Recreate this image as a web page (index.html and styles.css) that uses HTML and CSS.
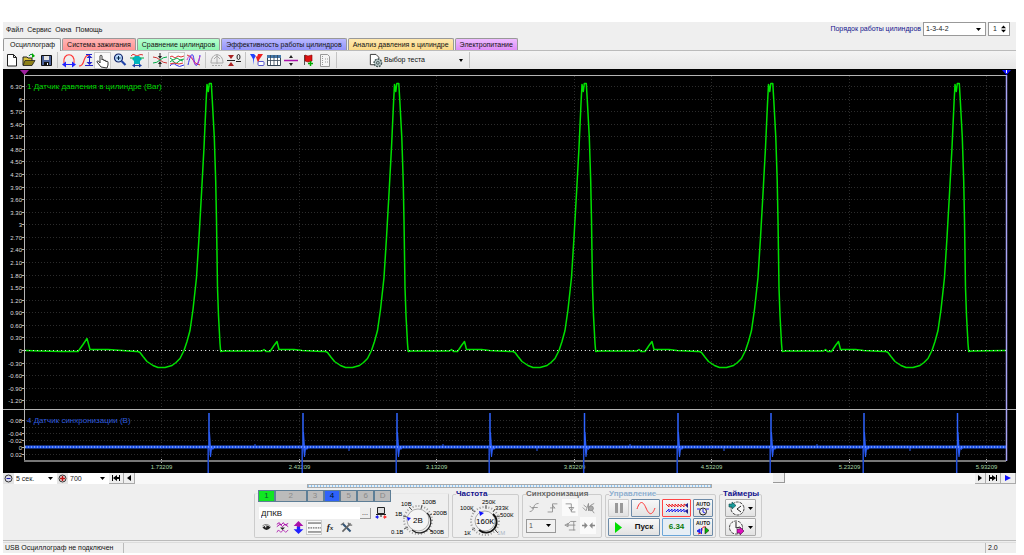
FILE: index.html
```html
<!DOCTYPE html>
<html lang="ru">
<head>
<meta charset="utf-8">
<title>USB Осциллограф</title>
<link rel="stylesheet" href="styles.css">
</head>
<body>
<div class="window">
  <header class="top">
    <nav class="menu">
      <button>Файл</button><button>Сервис</button><button>Окна</button><button>Помощь</button>
    </nav>
    <div class="order">
      <label for="order">Порядок работы цилиндров</label>
      <select id="order" class="combo combo-order"><option>1-3-4-2</option></select>
      <div class="spin">
        <input id="cyl" type="text" value="1" aria-label="Цилиндр">
        <svg width="7" height="10" viewBox="0 0 7 10"><path d="M0 4L3.500 0L7 4ZM0 6L3.500 10L7 6Z"/></svg>
      </div>
    </div>
  </header>

  <div class="tabs">
    <button class="tab active">Осциллограф</button>
    <button class="tab red">Система зажигания</button>
    <button class="tab green">Сравнение цилиндров</button>
    <button class="tab blue">Эффективность работы цилиндров</button>
    <button class="tab yellow">Анализ давления в цилиндре</button>
    <button class="tab violet">Электропитание</button>
  </div>

  <div class="toolbar">
    <button class="tool" aria-label="Новый"><svg viewBox="0 0 16 16"><path d="M3.500 2.500h6l3 3v8.500h-9zM9.500 2.500v3h3" fill="#fff" stroke="#222"/></svg></button>
    <button class="tool" aria-label="Открыть"><svg viewBox="0 0 16 16"><path d="M2 5h4l1 1h4v7H2z" fill="#d8c23c" stroke="#222"/><path d="M4 8.500h10l-3 5H2z" fill="#8d8018" stroke="#222" stroke-width=".8"/><path d="M8 4c1-2 3-2 4-1" fill="none" stroke="#083"/><path d="M11 1l3 3-3 2z" fill="#0a0"/></svg></button>
    <button class="tool" aria-label="Сохранить"><svg viewBox="0 0 16 16"><path d="M3.500 3.500h10v10h-10z" fill="#4a6098" stroke="#111"/><path d="M6 4h5v4H6z" fill="#e5e5e5"/><path d="M6 10h5v3H6z" fill="#111"/><path d="M9 11h1v2H9z" fill="#fff"/></svg></button>
    <span class="sep"></span>
    <button class="tool" aria-label="Период"><svg viewBox="0 0 16 16"><path d="M3 11C1 0 15 0 13 11" fill="none" stroke="#f33" stroke-width="1.200"/><path d="M4 12.500h8" stroke="#22f"/><path d="M1 12.500l4-3v6zM15 12.500l-4-3v6z" fill="#22f"/></svg></button>
    <button class="tool" aria-label="Амплитуда"><svg viewBox="0 0 16 16"><path d="M1 14c5 0 4-5 6-8 1-3 3-3 5-3" fill="none" stroke="#f33" stroke-width="1.200"/><path d="M11.500 5v7M7 13.500h8M8 2.500h6" stroke="#22c"/><path d="M11.500 3l3 3h-6zM11.500 13l3-3h-6z" fill="#22c"/></svg></button>
    <button class="tool on" aria-label="Рука"><svg viewBox="0 0 16 16"><path d="M6 14L2 9c0-2 2-1 3 1V3c0-1 2-1 2 0v4c0-1 2-1 2 0v1c0-1 2-1 2 0v1c0-1 2-1 2 0v3l-1 3z" fill="#fff" stroke="#222" stroke-width=".9"/></svg></button>
    <button class="tool" aria-label="Масштаб"><svg viewBox="0 0 16 16"><circle cx="6.500" cy="6" r="4" fill="#bdf" stroke="#126" stroke-width="1.200"/><path d="M4.500 6h4M6.500 4v4" stroke="#024"/><path d="M9.500 9l4 4" stroke="#24a" stroke-width="2.200"/></svg></button>
    <button class="tool" aria-label="Вписать"><svg viewBox="0 0 16 16"><path d="M2 4q2-3 4-1t4 0q2-1 4 0" fill="none" stroke="#d33"/><path d="M3 7l3-3h4l3 3-2 2H5zM5 9h6v3H5z" fill="#00b4bd"/><path d="M1 6h4M11 6h4" stroke="#0a4"/><path d="M4 13.500h8" stroke="#24a"/><path d="M3 13.500l3-2v4zM13 13.500l-3-2v4z" fill="#24a"/></svg></button>
    <span class="sep"></span>
    <button class="tool" aria-label="Центр"><svg viewBox="0 0 16 16"><path d="M1 5q4 0 7 3t7 3" fill="none" stroke="#c33"/><path d="M1 11q4 0 7-3t7-3" fill="none" stroke="#0a4"/><path d="M8 1v3M8 12v3" stroke="#222"/><path d="M6 4h4L8 7zM6 12h4L8 9z" fill="#222"/></svg></button>
    <button class="tool on" aria-label="Раздельно"><svg viewBox="0 0 16 16" fill="none"><path d="M1 4l2-1 3 2 3-2 3 1 3-1" stroke="#d33"/><path d="M1 9q2-3 4 0t4 0 5-1" stroke="#0a4"/><path d="M1 5l3 2 4-2 3 2 4-1" stroke="#0a4"/><path d="M1 13q3-4 6-1t8 0" stroke="#33e"/><path d="M1 11l4-1 5 1 4-1" stroke="#d33"/></svg></button>
    <button class="tool" aria-label="Вместе"><svg viewBox="0 0 16 16" fill="none"><path d="M1 3q4 1 6 5t7 5" stroke="#d33"/><path d="M2 13C5 0 7 0 8 8s4 8 6-5" stroke="#33e"/><path d="M1 8C4 0 6 5 8 10s4 2 6-6" stroke="#c3c"/></svg></button>
    <span class="sep"></span>
    <button class="tool" aria-label="Авто"><svg viewBox="0 0 16 16" fill="none" stroke="#aaa"><path d="M2 11C2 0 14 0 14 11zM8 2v10M5 7l3-3 3 3"/><path d="M3 13.500h10" stroke-dasharray="2 1"/></svg></button>
    <button class="tool" aria-label="Ноль"><svg viewBox="0 0 16 16"><path d="M1 8.500h8" stroke="#222"/><path d="M2 3h6L5 7zM2 14h6l-3-4z" fill="#a22"/><path d="M10 9.500h5" stroke="#222"/><ellipse cx="12.500" cy="5" rx="1.500" ry="2.500" fill="none" stroke="#222"/></svg></button>
    <span class="sep"></span>
    <button class="tool" aria-label="Фильтр"><svg viewBox="0 0 16 16"><path d="M1 2h7L5 7v6L4 7z" fill="#24f"/><path d="M6 2h8l-4 6v5L8 8z" fill="#e22"/><path d="M5 2h4l-1 3z" fill="#fff"/><rect x="9" y="9.500" width="6" height="4" rx="1" fill="#fff" stroke="#55c"/></svg></button>
    <button class="tool" aria-label="Таблица"><svg viewBox="0 0 16 16"><path d="M1.500 3.500h13v10h-13z" fill="#fff" stroke="#345"/><path d="M1 3h14v3H1z" fill="#47a"/><path d="M4.500 3v10M8 3v10M11.500 3v10M2 8.500h12" stroke="#345" stroke-width=".8"/></svg></button>
    <button class="tool" aria-label="Разделитель"><svg viewBox="0 0 16 16"><path d="M1 8.500h14" stroke="#a1a" stroke-width="1.500"/><path d="M6 6h4L8 3zM6 11h4l-2 3z" fill="#222"/></svg></button>
    <button class="tool" aria-label="Метка"><svg viewBox="0 0 16 16"><path d="M4.500 3v10" stroke="#555"/><path d="M5 3l3 1 4-1v6l-4 1-3-1z" fill="#d11" stroke="#800" stroke-width=".6"/><path d="M10.500 9v5M8 11.500h5" stroke="#0a0" stroke-width="1.500"/></svg></button>
    <button class="tool" aria-label="Отчет"><svg viewBox="0 0 16 16" fill="none"><path d="M3.500 2.500h7l2 2v10h-9z" fill="#f5f5f5" stroke="#999"/><path d="M5.500 4v9M8 7h3M8 10h3" stroke="#999" stroke-dasharray="1 1"/></svg></button>
    <span class="sep"></span>
    <button class="test">
      <svg width="15" height="15" viewBox="0 0 16 16"><path d="M2.500 1.500h6l3 3v8h-9z" fill="#fff" stroke="#333"/><g fill="none" stroke="#455"><circle cx="10.500" cy="10.500" r="4" fill="#bcc" stroke-dasharray="2 1" stroke-width="1.500"/><circle cx="10.500" cy="10.500" r="1.500"/></g></svg>
      <span>Выбор теста</span>
      <svg width="4" height="3" viewBox="0 0 4 3"><path d="M0 0h4L2 3z"/></svg>
    </button>
    <span class="sep"></span>
  </div>

  <svg id="chart" class="chart" viewBox="3 69 1013 404" role="img" aria-label="Осциллограмма"></svg>

  <div class="scroll">
    <button class="step" aria-label="Уменьшить"><svg width="9" height="9" viewBox="0 0 9 9"><circle cx="4.500" cy="4.500" r="3.500" fill="#dde" stroke="#333"/><path d="M2.500 4.500h4" stroke="#22a"/></svg></button>
    <select class="combo combo-time" aria-label="Время"><option>5 сек.</option></select>
    <button class="step" aria-label="Увеличить"><svg width="9" height="9" viewBox="0 0 9 9"><circle cx="4.500" cy="4.500" r="3.500" fill="#edd" stroke="#333"/><path d="M2 4.500h5M4.500 2v5" stroke="#b11" stroke-width="1.500"/></svg></button>
    <select class="combo combo-speed" aria-label="Обороты"><option>700</option></select>
    <button class="nav wide" aria-label="В начало"><svg width="8" height="6" viewBox="0 0 8 6"><path d="M0 0h1v6H0zM5 0v6L1 3zM5 2h2v2H5zM7 0h1v6H7z"/></svg></button>
    <button class="nav" aria-label="Назад"><svg width="4" height="6" viewBox="0 0 4 6"><path d="M4 0v6L0 3z"/></svg></button>
    <div class="track"><span class="thumb"></span></div>
    <button class="nav" aria-label="Вперед"><svg width="4" height="6" viewBox="0 0 4 6"><path d="M0 0v6l4-3z"/></svg></button>
    <button class="nav wide" aria-label="В конец"><svg width="8" height="6" viewBox="0 0 8 6"><path d="M7 0h1v6H7zM3 0v6l4-3zM0 0h1v6H0zM1 2h2v2H1z"/></svg></button>
    <button class="nav wide" aria-label="Следить"><svg width="6" height="6" viewBox="0 0 6 6"><path d="M0 0v6l6-3z" fill="#11f"/></svg></button>
  </div>
  <div class="splitter"><span></span></div>

  <section class="panel">
    <div class="group channels">
      <div class="chan-left">
        <div class="chan-tabs">
          <button class="ch c1">1</button><button class="ch c2">2</button><button class="ch">3</button><button class="ch c4">4</button><button class="ch">5</button><button class="ch">6</button><button class="ch">D</button>
        </div>
        <div class="chan-name">
          <input type="text" value="ДПКВ" aria-label="Датчик"><button class="more">...</button>
          <svg width="12" height="14" viewBox="0 0 12 14"><path d="M2.500 1.500h7v6h-7z" fill="#ddd" stroke="#222"/><path d="M1 8.500h10M6 8v3" stroke="#222"/><path d="M1 11h3" stroke="#22f"/><path d="M8 11h3" stroke="#f33"/><path d="M0 11l3-2v4z" fill="#22e"/><path d="M12 11l-3-2v4z" fill="#f33"/></svg>
        </div>
        <div class="chan-tools">
          <button class="tool" aria-label="Показать"><svg viewBox="0 0 16 16"><path d="M3 8q5-5 10 0-5 6-10 0z" fill="#222"/><circle cx="7" cy="7" r="1" fill="#fff"/><path d="M3 6q5-4 10 1" fill="none" stroke="#666"/></svg></button>
          <button class="tool" aria-label="Сигнал"><svg viewBox="0 0 16 16" fill="none" stroke="#a1a"><path d="M1 4l3-2 2 3 3-3 2 3 4-2M1 7l4-3 3 3 3-3 4 3" stroke-width="1.200"/><path d="M1 14l2-3 3 3 3-3 3 3 3-3"/><path d="M5 8h6l-3 3z" fill="#222" stroke="none"/></svg></button>
          <button class="tool" aria-label="Сдвиг"><svg viewBox="0 0 16 16"><path d="M8 0l6 6h-4v3H6V6H2z" fill="#a1a"/><path d="M8 16l6-6h-4V7H6v3H2z" fill="#22f"/></svg></button>
          <button class="tool on" aria-label="Линии"><svg viewBox="0 0 16 16" stroke="#222"><path d="M0 2.500h16M0 13.500h16"/><path d="M0 8.500h16" stroke-dasharray="2 1"/></svg></button>
          <button class="tool" aria-label="Функция"><span class="fx">f<small>x</small></span></button>
          <button class="tool" aria-label="Настройки"><svg viewBox="0 0 16 16" fill="none"><path d="M3 3l10 10" stroke="#357" stroke-width="2.500"/><path d="M13 3L3 13" stroke="#666" stroke-width="2"/><path d="M10 2l1 3h4M1 5l4-3" stroke="#777" stroke-width="1.500"/></svg></button>
        </div>
      </div>
      <svg class="dial" width="57" height="44" viewBox="391 496 57 44" role="img" aria-label="Диапазон">
        <circle cx="418" cy="522" r="14" fill="none" stroke="#999" stroke-width="2" stroke-dasharray="1 2"/>
        <circle cx="418" cy="522" r="11" fill="#f5f5f5" stroke="#aaa"/>
        <path d="M427 515a11 11 0 0 1-15 17" fill="none" stroke="#222" stroke-width="1.200"/>
        <path d="M404 531l4-2M403 518l4 1M409 509l3 3M422 507l-1 4M432 516l-4 2M429 531l4 3" stroke="#555"/>
        <path d="M407 519l4 1-3 3z" fill="#11f"/>
        <text x="413" y="525" class="dial-value">2В</text>
        <g class="dial-text"><text x="401" y="508">10В</text><text x="422" y="506">100В</text><text x="395" y="518">1В</text><text x="433" y="517">200В</text><text x="391" y="536">0.1В</text><text x="430" y="536">500В</text></g>
      </svg>
    </div>

    <fieldset class="group freq">
      <legend>Частота</legend>
      <svg class="dial" width="60" height="38" viewBox="456 500 60 38" role="img" aria-label="Частота">
        <circle cx="484" cy="522" r="14" fill="none" stroke="#999" stroke-width="2" stroke-dasharray="1 2"/>
        <circle cx="484" cy="522" r="10" fill="#f5f5f5" stroke="#aaa"/>
        <path d="M492 515a10.500 10.500 0 0 1-14 16" fill="none" stroke="#111" stroke-width="1.800"/>
        <path d="M471 511l3 2M485 506v4M494 510l-2 3M499 517l-4 1M471 531l3-2M494 531l3 3" stroke="#555"/>
        <path d="M478 512l5 2-4 3z" fill="#11f"/>
        <text x="475" y="525" class="dial-value">160К</text>
        <g class="dial-text"><text x="481" y="505">250К</text><text x="459" y="511">100К</text><text x="494" y="511">333К</text><text x="499" y="518">500К</text><text x="463" y="536">1К</text><text x="496" y="536" fill="#aab6c4">1М</text></g>
      </svg>
    </fieldset>

    <fieldset class="group sync">
      <legend>Синхронизация</legend>
      <div class="sync-grid">
        <button class="tool" aria-label="Фронт"><svg viewBox="0 0 16 16" fill="none" stroke="#888"><path d="M2 13q4 0 5-5t6-5M2 6l4 4M5 8h7"/></svg></button>
        <button class="tool" aria-label="Подъем"><svg viewBox="0 0 16 16" fill="none" stroke="#888"><path d="M2 13.500h6v-10h6M5 8.500h6M8 5l3 4"/></svg></button>
        <button class="tool lit" aria-label="Спад"><svg viewBox="0 0 16 16" fill="none" stroke="#888"><path d="M2 3.500h7v10h5M6 8h6l-3 4z"/></svg></button>
        <button class="tool" aria-label="Авто"><svg viewBox="0 0 16 16" fill="none" stroke="#888"><path d="M1 8l4 4 3-9v9l3-7 4-2M2 5l4 3M12 11l3 4"/><circle cx="11" cy="9" r="3" fill="#aaa"/></svg></button>
        <select class="combo combo-sync" aria-label="Канал"><option>1</option></select>
        <button class="tool" aria-label="Уровень"><svg viewBox="0 0 16 16" fill="none" stroke="#888"><path d="M4 7l4-4h7M3 7.500h11M6 13.500h8M12 3v11M1 7.500l4-2v4z"/></svg></button>
        <button class="tool lit" aria-label="Центр"><svg viewBox="0 0 16 16" fill="#888"><path d="M0 7h3V4l4 4-4 4V9H0zM16 7h-3V4L9 8l4 4V9h3z"/></svg></button>
      </div>
    </fieldset>

    <fieldset class="group control">
      <legend>Управление</legend>
      <div class="control-grid">
        <button class="btn off" aria-label="Пауза"><svg width="8" height="10" viewBox="0 0 8 10"><path d="M0 0h3v10H0zM5 0h3v10H5z" fill="#999"/></svg></button>
        <button class="btn" aria-label="Синус"><svg width="20" height="14" viewBox="0 0 20 14"><path d="M1 8C4-1 7 0 10 7s6 8 9 0" fill="none" stroke="#f33"/></svg></button>
        <button class="btn hot" aria-label="Запись"><svg width="24" height="14" viewBox="0 0 24 14" fill="none"><path d="M1 3l3 3V3l3 3V3l3 3V3l3 3V3l3 3V3l3 3V3l3 2" stroke="#e22"/><path d="M1 11l3-3v3l3-3v3l3-3v3l3-3v3l3-3v3l3-3v3l3-2" stroke="#22e"/><path d="M20 4l3-2v5zM20 10l3-2v5z" fill="#228"/></svg></button>
        <button class="btn auto" aria-label="Автопоиск"><b>AUTO</b><svg width="14" height="9" viewBox="0 0 14 9" fill="none"><circle cx="7" cy="4.500" r="3.500" stroke="#222"/><path d="M1 2h3M10 2h3" stroke="#22e"/><path d="M7 2v3l2 1" stroke="#22e"/></svg></button>
        <button class="btn start"><svg width="7" height="11" viewBox="0 0 7 11"><path d="M0 0v11l7-5.500z" fill="#0d0"/></svg><span>Пуск</span></button>
        <button class="btn value">6.34</button>
        <button class="btn auto" aria-label="Автозапуск"><b>AUTO</b><svg width="14" height="9" viewBox="0 0 14 9" fill="none"><path d="M2 8q4 0 4-4t4-3" stroke="#e22"/><path d="M1 5l3-2v4zM5.500 2v6" stroke="#22e" fill="#22e"/><path d="M9 1v7l4-3.500z" fill="#0b0" stroke="#222" stroke-width=".6"/></svg></button>
      </div>
    </fieldset>

    <fieldset class="group timers">
      <legend>Таймеры</legend>
      <button class="btn" aria-label="Таймер запуска"><svg width="17" height="15" viewBox="0 0 17 15" fill="none"><circle cx="9.500" cy="7.500" r="6.500" fill="#f8f8f8" stroke="#444" stroke-dasharray="3 1"/><path d="M9 8l4-3M9 8l4 3" stroke="#222"/><path d="M1 3h3V1l4 3.500-4 3.500V6H1z" fill="#189a9a" stroke="#144" stroke-width=".6"/></svg><svg width="5" height="3" viewBox="0 0 5 3"><path d="M0 0h5L2.500 3z"/></svg></button>
      <button class="btn" aria-label="Таймер остановки"><svg width="17" height="15" viewBox="0 0 17 15" fill="none"><circle cx="8" cy="7.500" r="6.500" fill="#f8f8f8" stroke="#444" stroke-dasharray="3 1"/><path d="M8 2v6l4-1" stroke="#222"/><path d="M9 9h3V7l4 4-4 4v-2H9z" fill="#d1b" stroke="#414" stroke-width=".6"/></svg><svg width="5" height="3" viewBox="0 0 5 3"><path d="M0 0h5L2.500 3z"/></svg></button>
    </fieldset>
  </section>

  <footer class="status">
    <span class="state">USB Осциллограф не подключен</span>
    <span class="version">2.0</span>
  </footer>
</div>
<script src="chart.js"></script>
</body>
</html>
```

FILE: styles.css
```css
* { box-sizing: border-box; }
body { margin: 22px 8px 0 3px; background: #fff; color: #111; font: 7px/10px "Liberation Sans", Arial, sans-serif; }
button, input, select { font: inherit; color: inherit; margin: 0; padding: 0; border: 0; border-radius: 0; background: none; }
svg { display: block; flex: none; }
.window { background: #efefef; box-shadow: 1px 0 #ccc, -1px 0 #ccc; }

.top { display: flex; justify-content: space-between; height: 16px; padding-right: 6px; }
.menu { display: flex; gap: 4px; padding-left: 3px; align-items: center; }
.order { display: flex; align-items: center; gap: 2px; height: 14px; color: #11118c; }
.combo { appearance: none; background: #fff url("data:image/svg+xml,%3Csvg xmlns='http://www.w3.org/2000/svg' width='5' height='3'%3E%3Cpath d='M0 0h5L2.500 3z'/%3E%3C/svg%3E") no-repeat right 4px center; border: 1px solid #999; color: #222; padding: 0 2px; }
.combo-order { width: 63px; height: 14px; }
.spin { display: flex; align-items: center; width: 22px; height: 14px; padding: 0 3px 0 4px; background: #fff; border: 1px solid #999; color: #222; }
.spin input { width: 8px; }
.spin svg { width: 5px; }

.tabs { display: flex; gap: 1px; height: 13px; border-bottom: 1px solid #bbb; align-items: flex-end; }
.tab { height: 12px; padding: 0 4px; border: 1px solid #999; border-bottom: 0; border-radius: 2px 2px 0 0; white-space: nowrap; }
.tab.active { height: 13px; padding: 0 5px 0 6px; background: #f4f4f4; margin-bottom: -1px; }
.red { background: linear-gradient(#ffb5b5, #ff9494); }
.green { background: linear-gradient(#b5ffcf, #8cf5b0); }
.blue { background: linear-gradient(#b8b8ff, #9494fa); }
.yellow { background: linear-gradient(#ffe9b0, #fbd987); }
.violet { background: linear-gradient(#edbcff, #df8cf8); }

.toolbar { display: flex; align-items: center; height: 18px; background: linear-gradient(#f4f4f4, #e6e6e6); }
.tool { width: 17px; height: 17px; display: grid; place-items: center; }
.tool svg { width: 16px; height: 16px; }
.tool.on { background: #fafafa; border: 1px solid #ccc; }
.sep { width: 1px; height: 16px; margin: 0 2px 0 3px; background: #c4c4c4; }
.test { display: flex; align-items: center; gap: 1px; width: 127px; height: 17px; padding: 0 3px 0 29px; }
.test span { flex: 1; text-align: left; }

.chart { width: 100%; height: auto; background: #000; font-family: "Liberation Sans", Arial, sans-serif; }
.axis-text { font-size: 6px; fill: #ddd; text-anchor: end; }
.time-text { font-size: 6px; fill: #a9d6a9; text-anchor: middle; }
.title { font-size: 8px; }
.grid { stroke: #2c2c2c; stroke-dasharray: 1 2; }
.frame { stroke: #b5b5b5; fill: none; }

.scroll { display: flex; height: 11px; background: #fff; }
.step { width: 11px; display: grid; place-items: center; background: #e4e4e4; }
.combo-time { width: 43px; border: 0; }
.combo-speed { width: 41px; border: 0; }
.nav { width: 11px; display: grid; place-items: center; background: #eee; border: 1px solid #aaa; border-width: 0 1px 1px 0; }
.nav.wide { width: 15px; }
.track { flex: 1; background: #f8f8f8; }
.thumb { display: block; width: 12px; height: 10px; margin-left: 76%; background: #eee; border: 1px solid #999; border-width: 0 1px 1px 0; }
.splitter { height: 5px; }
.splitter span { display: block; width: 40%; height: 4px; margin: 0 auto; border: 1px solid #aaa; background: repeating-linear-gradient(90deg, #8fc4f0 0 1px, #e3f0fa 1px 3px); }

.panel { display: flex; justify-content: center; align-items: flex-end; gap: 3px; height: 52px; padding: 0 3px 2px 0; border-bottom: 1px solid #bbb; }
.group { min-width: 0; margin: 0; padding: 0; border: 1px solid #ccc; border-radius: 2px; }
.group legend { height: 10px; margin-left: 3px; padding: 0; font-weight: bold; font-size: 8px; color: #11118c; }
.channels { display: flex; height: 45px; padding-left: 3px; border-top-color: #e8e8e8; }
.chan-left { width: 133px; margin-top: -4px; }
.chan-tabs { display: flex; }
.ch { flex: 1; height: 12px; background: #bbb; border: 1px solid #5e7e96; color: #8a8a8a; font-size: 8px; }
.c1 { background: #11e622; color: #153; }
.c2 { flex: 2; }
.c4 { background: #2f62fa; color: #012; }
.chan-name { display: flex; align-items: center; height: 14px; margin: 4px 0 0 1px; }
.chan-name input { width: 101px; height: 12px; padding: 0 2px; background: #fff; font-size: 8px; }
.chan-name .more { width: 11px; height: 11px; margin-right: 4px; background: #eee; border: 1px solid #999; border-width: 0 1px 1px 0; line-height: 6px; }
.chan-tools { display: flex; }
.chan-tools .tool { width: 16px; height: 15px; }
.chan-tools .tool svg { width: 13px; height: 13px; }
.fx { font: italic bold 9px/10px "Liberation Serif", serif; }
.fx small { font-size: 7px; }
.dial-value { font-size: 8px; }
.dial-text { font-size: 6px; }
.freq, .sync, .control, .timers { height: 49px; }
.freq { width: 67px; }
.freq .dial { margin-left: 4px; }
.sync { width: 80px; }
.sync legend { color: #666; }
.sync-grid { display: grid; grid-template-columns: repeat(4, 18px); padding-left: 3px; gap: 1px 0; }
.sync-grid .tool { width: 16px; height: 17px; }
.sync-grid .tool svg { width: 13px; height: 13px; }
.lit { background: #fafafa; }
.combo-sync { grid-column: span 2; width: 30px; height: 14px; align-self: center; background-color: #f1f1f1; color: #555; }
.control { width: 111px; }
.control legend { color: #8fb0d0; }
.control-grid { display: grid; grid-template-columns: 21px 29px 29px 20px; gap: 1px 2px; padding-left: 2px; }
.btn { height: 18px; display: flex; align-items: center; justify-content: center; background: linear-gradient(#f8f8f8, #e2e2e2); border: 1px solid #6d8ba8; border-radius: 1px; }
.btn.off { border-color: #ccc; }
.btn.hot { border-color: #f44; }
.start { grid-column: span 2; gap: 13px; font-weight: bold; font-size: 8px; }
.value { border-color: #6aa5d8; background: #e6eef5; color: #0a7a0a; font-weight: bold; font-size: 8px; }
.auto { flex-direction: column; font-size: 5px; line-height: 6px; }
.timers { width: 43px; }
.timers .btn { width: 31px; gap: 3px; margin: 0 0 1px 5px; border-color: #aaa; }

.status { display: flex; justify-content: space-between; height: 11px; margin-top: 1px; border-top: 1px solid #ddd; }
.state { width: 121px; padding-left: 2px; border-right: 1px solid #bbb; white-space: nowrap; }
.version { width: 31px; padding-left: 2px; border-left: 1px solid #bbb; }
```

FILE: chart.js
```js
const LEFT = 24, RIGHT = 1006, ZERO = 350, SYNC = 447;
const out = [];
const line = (x1, y1, x2, y2, cls) =>
  out.push(`<line x1="${x1}" y1="${y1}" x2="${x2}" y2="${y2}" class="${cls}"/>`);
const text = (x, y, cls, s) => out.push(`<text x="${x}" y="${y}" class="${cls}">${s}</text>`);

// Pressure scale, 0.3 bar per division
for (let i = 21; i >= -4; i--) {
  const y = Math.round(ZERO - i * 12.57) + 0.5;
  const v = i * 0.3;
  text(22, y + 2, 'axis-text', i % 10 ? v.toFixed(2) : String(Math.round(v)));
  line(22, y, LEFT, y, 'frame');
  line(LEFT + 2, y, RIGHT, y, 'grid');
}
// Sync scale
[[420, '-0.08'], [427, ''], [433, '-0.04'], [440, '-0.02'], [447, '0'], [454, '0.02']].forEach(([y, s]) => {
  text(22, y + 2.5, 'axis-text', s);
  line(22, y + 0.5, LEFT, y + 0.5, 'frame');
  line(LEFT + 2, y + 0.5, RIGHT, y + 0.5, 'grid');
});
// Time scale
for (let i = 0; i < 7; i++) {
  const x = Math.round(161 + i * 137.5) + 0.5;
  line(x, 76, x, 461, 'grid');
  line(x, 459, x, 463, 'frame');
  text(x, 469, 'time-text', (1.73209 + i * 0.7).toFixed(5));
}
out.push('<path class="frame" d="M24.500 70V461.500M24 75.500H1006M3 409.500H1016"/>');
out.push('<path d="M24 461H1006" stroke="#777" stroke-width="2"/>');

// Cylinder pressure trace; offsets are relative to each compression peak
const cycle = [[-72, 1], [-70, 2], [-67, 6], [-63, 11], [-57, 15], [-52, 17], [-45, 17], [-38, 15], [-34, 12],
  [-30, 8], [-26, 0], [-23, -9], [-20, -20], [-17, -41], [-13.5, -73], [-11, -113], [-8.5, -157],
  [-6, -203], [-4, -247], [-3, -266], [-1.7, -259], [-0.7, -267], [1.3, -267], [2.3, -250],
  [4.3, -213], [5.7, -170], [6.5, -130], [7.5, -63], [8.5, -35], [10, -7], [10.7, 1], [14, 0.5],
  [52, 0.5], [54, -1], [56, 1], [60, 1], [64, -5], [67, -9], [69, -1], [84, -1], [92, 0], [112, 1]];
const pts = [[25, 0], [40, 0.5], [62, 1], [78, 1], [83, -6], [87, -12], [90, -1], [108, -1], [122, 0], [136, 1]]
  .map(([x, y]) => [x, ZERO + 0.5 + y]);
[210, 397.5, 585, 771.5, 958].forEach(p => cycle.forEach(([dx, dy]) => {
  if (p + dx < RIGHT) pts.push([p + dx, ZERO + 0.5 + dy]);
}));
pts.push([RIGHT, ZERO + 0.5]);
out.push(`<polyline points="${pts.join(' ')}" fill="none" stroke="#00e000" stroke-width="1.500" stroke-linejoin="round"/>`);
out.push('<path d="M25 350.500H1006" stroke="#ddd" stroke-dasharray="1 3"/>');

// Crank sync trace
out.push(`<path d="M25 ${SYNC}H1006" stroke="#2458ee" stroke-width="3"/>`);
[209, 303, 397, 490, 584.5, 678, 771, 864, 957.5].forEach(x => {
  out.push(`<path d="M${x - 0.8} 447V473" stroke="#2450dd" stroke-width="1.500"/>`);
  out.push(`<path d="M${x} 447V413" stroke="#2f64ff" stroke-width="1.500"/>`);
  out.push(`<path d="M${x} 447V432h1l1 15h4l-2 3-1-1-1 8h-1z" fill="#2a5cf5"/>`);
});
[255, 349, 443, 537, 630, 724, 817, 910].forEach((x, i) =>
  out.push(`<path d="M${x} 447v${i % 2 ? 4 : -3}" stroke="#2a5cf5"/>`));
out.push(`<path d="M25 ${SYNC}H1006" stroke="#bcd2ff" stroke-width="1" stroke-dasharray="1 2"/>`);

// Cursors
out.push('<path d="M1006.500 75V461" stroke="#a9a4f5" stroke-width="1.500"/>');
out.push('<path d="M20 70h9l-4.500 5z" fill="#a020a0"/><path d="M1002 70h9l-4.500 5z" fill="#11f"/><path d="M1006.500 70v3" stroke="#fff"/>');
out.push('<text x="27" y="89" class="title" fill="#00d800">1 Датчик давления в цилиндре (Bar)</text>');
out.push('<text x="27" y="423" class="title" fill="#2f5cdf">4 Датчик синхронизации (В)</text>');
document.getElementById('chart').innerHTML = out.join('');
```
